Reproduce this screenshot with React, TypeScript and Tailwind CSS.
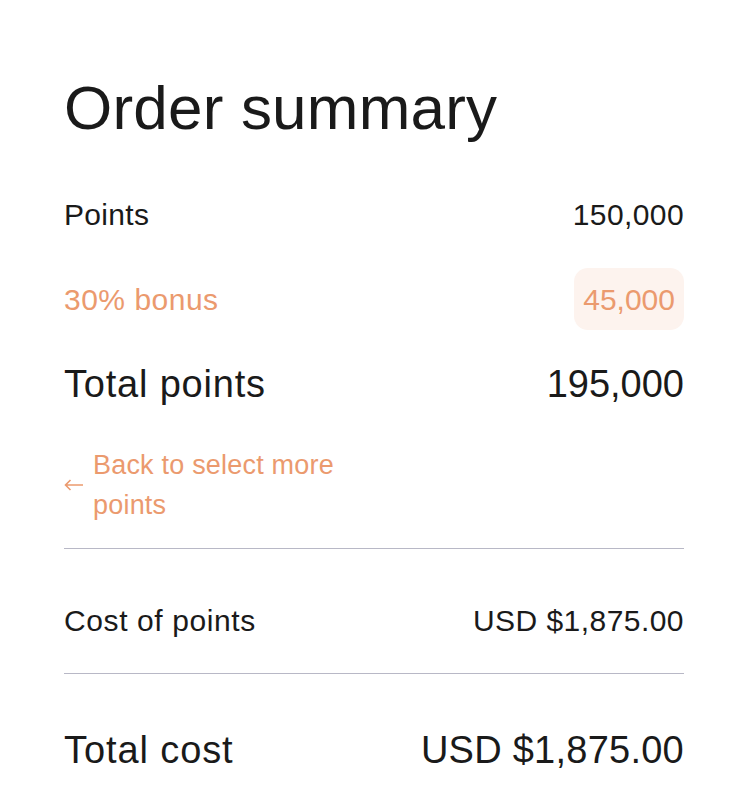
export default function App() {
  return (
    <div
      className="w-[748px] min-h-[800px] bg-white px-[64px] pt-[72px] text-[#1a1a1a]"
      style={{ fontFamily: '"Liberation Sans", Arial, sans-serif' }}
    >
      <h1 className="text-[62px] leading-[72px] tracking-[0.2px]">Order summary</h1>

      <div className="mt-[52px] flex h-[36px] items-center justify-between text-[30px]">
        <span className="tracking-[0.3px]">Points</span>
        <span className="tracking-[0.4px]">150,000</span>
      </div>

      <div className="mt-[36px] flex h-[62px] items-center justify-between text-[30px] text-[#eb9a6e]">
        <span className="tracking-[0.5px]">30% bonus</span>
        <span className="flex h-[62px] items-center rounded-[14px] bg-[#fdf3ee] px-[9px]">45,000</span>
      </div>

      <div className="mt-[32px] flex h-[44px] items-center justify-between text-[38px]">
        <span className="tracking-[0.8px]">Total points</span>
        <span>195,000</span>
      </div>

      <a href="#" className="mt-[39px] flex items-center gap-[9px] text-[27px] leading-[40px] text-[#eb9a6e]">
        <svg width="20" height="12" viewBox="0 0 20 12" fill="none" stroke="currentColor" strokeWidth="1.6">
          <path d="M19 6H1.5M6.5 1L1.5 6l5 5" />
        </svg>
        <span className="w-[250px] tracking-[0.2px]">Back to select more points</span>
      </a>

      <div className="mt-[23px] border-t border-[#b8b8c6]" />

      <div className="mt-[53px] flex h-[36px] items-center justify-between text-[30px]">
        <span className="tracking-[0.6px]">Cost of points</span>
        <span className="tracking-[0.45px]">USD $1,875.00</span>
      </div>

      <div className="mt-[35px] border-t border-[#b8b8c6]" />

      <div className="mt-[54px] flex h-[44px] items-center justify-between text-[38px]">
        <span className="tracking-[0.9px]">Total cost</span>
        <span className="tracking-[0.25px]">USD $1,875.00</span>
      </div>
    </div>
  );
}
